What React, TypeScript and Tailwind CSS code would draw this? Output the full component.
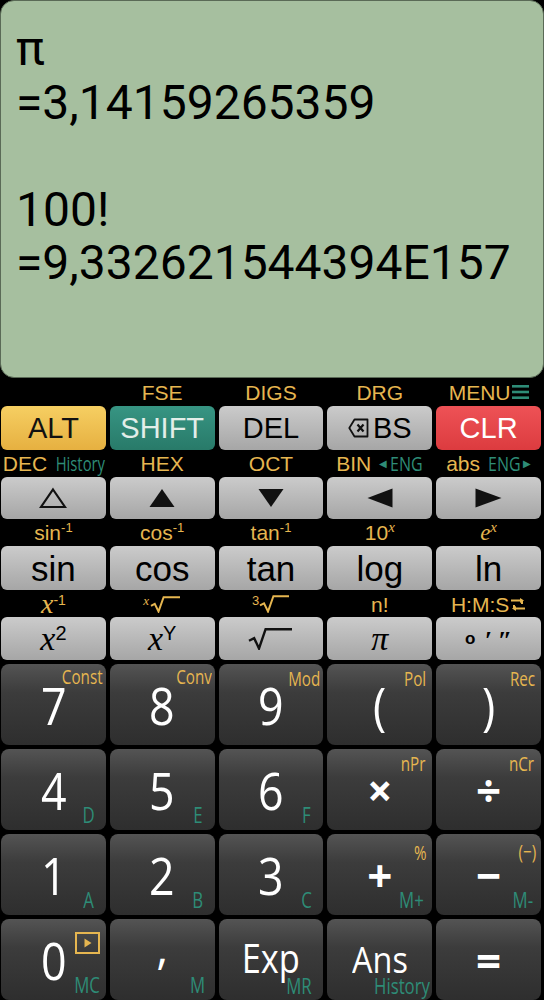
import React from "react";

const LS = "font-['Liberation_Sans',Arial,sans-serif]";
const SERIF = "font-['Liberation_Serif','Times_New_Roman',serif]";
const OS = "font-['Open_Sans',sans-serif]";
const RB = "font-['Roboto',sans-serif]";
const GOLD = "text-[#e6b650]";
const TEAL = "text-[#2e8c77]";

const ROW = "grid grid-cols-5 gap-x-[4px] pl-[1px] pr-[3px]";
const GRAY =
  "flex items-center justify-center rounded-[6px] bg-linear-to-b from-[#cbcbcb] to-[#a6a6a6] text-black";

function Cond({ w, s, children, cls = "" }: { w: string; s: string; children: React.ReactNode; cls?: string }) {
  return (
    <span className={`inline-flex justify-center whitespace-nowrap ${w} ${cls}`}>
      <span className={`inline-block whitespace-nowrap ${s}`}>{children}</span>
    </span>
  );
}

function Rad({ w, h, color, sw = 2.2 }: { w: number; h: number; color: string; sw?: number }) {
  const d = `M1 ${h * 0.58} L${h * 0.28} ${h * 0.46} L${h * 0.5} ${h - 1.5} L${h * 0.8} 1.2 H${w - 1}`;
  return (
    <svg width={w} height={h} viewBox={`0 0 ${w} ${h}`} className="inline-block">
      <path d={d} fill="none" stroke={color} strokeWidth={sw} strokeLinejoin="miter" />
    </svg>
  );
}

function Sup({ children, cls = "" }: { children: React.ReactNode; cls?: string }) {
  return <span className={`relative -top-[8px] text-[13px] ${cls}`}>{children}</span>;
}

function LabelRow({ h, items }: { h: string; items: React.ReactNode[] }) {
  return (
    <div className={`${ROW} ${h}`}>
      {items.map((it, i) => (
        <div key={i} className={`flex items-center justify-center whitespace-nowrap ${LS} ${GOLD} text-[21px] leading-none`}>
          {it}
        </div>
      ))}
    </div>
  );
}

type BK = {
  main: React.ReactNode;
  gold?: React.ReactNode;
  goldCls?: string;
  teal?: React.ReactNode;
  tealCls?: string;
  extra?: React.ReactNode;
};

function BigKey({ k }: { k: BK }) {
  return (
    <div className="relative flex items-center justify-center rounded-[8px] bg-linear-to-b from-[#545454] via-[#3c3c3c] via-35% to-[#2e2e2e] text-white">
      {k.main}
      {k.gold && (
        <span className={`absolute ${OS} ${GOLD} text-[20px] leading-none whitespace-nowrap ${k.goldCls ?? "top-[4px] right-[4px]"}`}>
          <span className="inline-block origin-right scale-x-[0.76]">{k.gold}</span>
        </span>
      )}
      {k.teal && (
        <span className={`absolute ${OS} ${TEAL} text-[21px] leading-none whitespace-nowrap flex justify-center ${k.tealCls ?? "bottom-[4px] right-0 w-[34px]"}`}>
          <span className="inline-block scale-x-[0.8]">{k.teal}</span>
        </span>
      )}
      {k.extra}
    </div>
  );
}

const Dg = ({ c }: { c: string }) => (
  <span className={`${OS} text-[52px] leading-none inline-block scale-x-[0.86]`}>{c}</span>
);
const Op = ({ c }: { c: string }) => (
  <span className={`${OS} text-[44px] font-bold leading-none inline-block`}>{c}</span>
);

export default function App() {
  const bigRows: BK[][] = [
    [
      { main: <Dg c="7" />, gold: "Const", goldCls: "top-[3px] right-[3px]" },
      { main: <Dg c="8" />, gold: "Conv", goldCls: "top-[3px] right-[3px]" },
      { main: <Dg c="9" />, gold: "Mod", goldCls: "top-[5px] right-[3px]" },
      { main: <Dg c="(" />, gold: "Pol", goldCls: "top-[5px] right-[6px]" },
      { main: <Dg c=")" />, gold: "Rec", goldCls: "top-[5px] right-[6px]" },
    ],
    [
      { main: <Dg c="4" />, teal: "D" },
      { main: <Dg c="5" />, teal: "E" },
      { main: <Dg c="6" />, teal: "F" },
      { main: <Op c="×" />, gold: "nPr", goldCls: "top-[5px] right-[7px]" },
      { main: <Op c="÷" />, gold: "nCr", goldCls: "top-[5px] right-[7px]" },
    ],
    [
      { main: <Dg c="1" />, teal: "A" },
      { main: <Dg c="2" />, teal: "B" },
      { main: <Dg c="3" />, teal: "C" },
      { main: <Op c="+" />, gold: "%", goldCls: "top-[9px] right-[6px]", teal: "M+", tealCls: "bottom-[4px] right-[4px] w-[34px]" },
      { main: <Op c="−" />, gold: "(−)", goldCls: "top-[8px] right-[5px]", teal: "M-", tealCls: "bottom-[4px] right-[1px] w-[34px]" },
    ],
    [
      {
        main: <Dg c="0" />,
        teal: "MC",
        tealCls: "bottom-[4px] right-[2px] w-[34px]",
        extra: (
          <svg width="25" height="22" viewBox="0 0 25 22" className="absolute top-[13px] right-[6px]">
            <rect x="1" y="1" width="23" height="20" fill="none" stroke="#e6b650" strokeWidth="2" />
            <path d="M9.5 6.5 L16.5 11 L9.5 15.5 Z" fill="#e6b650" />
          </svg>
        ),
      },
      {
        main: <span className={`${OS} text-[46px] leading-none inline-block -translate-y-[14px]`}>,</span>,
        teal: "M",
      },
      {
        main: <span className={`${OS} text-[40px] leading-none inline-block scale-x-[0.86] -translate-y-[2px]`}>Exp</span>,
        teal: "MR",
        tealCls: "bottom-[3px] right-[7px] w-[34px]",
      },
      {
        main: <span className={`${OS} text-[36px] leading-none inline-block scale-x-[0.9]`}>Ans</span>,
        teal: "History",
        tealCls: "bottom-[3px] right-[-5px] w-[70px]",
      },
      { main: <Op c="=" /> },
    ],
  ];

  return (
    <div className="w-[544px] h-[1000px] bg-black overflow-hidden flex flex-col">
      {/* Display */}
      <div
        className={`h-[378px] shrink-0 rounded-[14px] border border-[#5a6a56] bg-[#a6bf9f] px-[15px] pt-[21px] text-black ${RB} text-[48px] leading-[53.5px]`}
      >
        <div>π</div>
        <div>=3,14159265359</div>
        <div>&nbsp;</div>
        <div>100!</div>
        <div>=9,332621544394E157</div>
      </div>

      {/* Label row A */}
      <LabelRow
        h="h-[28px]"
        items={[
          "",
          "FSE",
          "DIGS",
          "DRG",
          <span key="m" className="flex items-center">
            MENU
            <svg width="17" height="14" viewBox="0 0 17 14" className="ml-[1px]">
              <rect x="0" y="0" width="17" height="2.6" fill="#2e8c77" />
              <rect x="0" y="5.7" width="17" height="2.6" fill="#2e8c77" />
              <rect x="0" y="11.4" width="17" height="2.6" fill="#2e8c77" />
            </svg>
          </span>,
        ]}
      />

      {/* Row 1 */}
      <div className={`${ROW} h-[44px] ${LS} text-[29px] leading-none`}>
        <div className="flex items-center justify-center rounded-[6px] bg-linear-to-b from-[#f6cf62] to-[#e6b040] text-[#111]">ALT</div>
        <div className="flex items-center justify-center rounded-[6px] bg-linear-to-b from-[#379583] to-[#287a69] text-[#e2eee9]">SHIFT</div>
        <div className={GRAY}>DEL</div>
        <div className={GRAY}>
          <svg width="21" height="20" viewBox="0 0 21 20" className="mr-[4px]">
            <path d="M6.5 1.5 H19.5 V18.5 H6.5 L1.3 10 Z" fill="none" stroke="#111" strokeWidth="1.8" strokeLinejoin="round" />
            <path d="M9.5 6.5 L15.5 13.5 M15.5 6.5 L9.5 13.5" stroke="#111" strokeWidth="2.2" />
          </svg>
          BS
        </div>
        <div className="flex items-center justify-center rounded-[6px] bg-linear-to-b from-[#ee5256] to-[#dc3b3f] text-white">CLR</div>
      </div>

      {/* Label row B */}
      <LabelRow
        h="h-[27px]"
        items={[
          <span key="a" className="flex items-center">
            DEC
            <Cond w="w-[48px]" s="scale-x-[0.74]" cls={`${OS} ${TEAL} text-[20px] ml-[9px]`}>History</Cond>
          </span>,
          "HEX",
          "OCT",
          <span key="b" className="flex items-center">
            BIN
            <span className={`${TEAL} text-[10px] ml-[8px] mr-[3px]`}>◀</span>
            <Cond w="w-[33px]" s="scale-x-[0.8]" cls={`${OS} ${TEAL} text-[20px]`}>ENG</Cond>
          </span>,
          <span key="c" className="flex items-center">
            abs
            <Cond w="w-[34px]" s="scale-x-[0.8]" cls={`${OS} ${TEAL} text-[20px] ml-[7px]`}>ENG</Cond>
            <span className={`${TEAL} text-[10px] ml-[2px]`}>▶</span>
          </span>,
        ]}
      />

      {/* Row 2 arrows */}
      <div className={`${ROW} h-[42px]`}>
        <div className={GRAY}>
          <svg width="28" height="22" viewBox="0 0 28 22">
            <path d="M14 2.5 L26 20 H2 Z" fill="none" stroke="#111" strokeWidth="2.2" />
          </svg>
        </div>
        <div className={GRAY}>
          <svg width="26" height="20" viewBox="0 0 26 20">
            <path d="M13 1 L25.5 19 H0.5 Z" fill="#111" />
          </svg>
        </div>
        <div className={GRAY}>
          <svg width="26" height="20" viewBox="0 0 26 20">
            <path d="M0.5 1 H25.5 L13 19 Z" fill="#111" />
          </svg>
        </div>
        <div className={GRAY}>
          <svg width="26" height="20" viewBox="0 0 26 20">
            <path d="M0.5 10 L25.5 0.5 V19.5 Z" fill="#111" />
          </svg>
        </div>
        <div className={GRAY}>
          <svg width="27" height="20" viewBox="0 0 27 20">
            <path d="M0.5 0.5 L26.5 10 L0.5 19.5 Z" fill="#111" />
          </svg>
        </div>
      </div>

      {/* Label row C */}
      <LabelRow
        h="h-[27px]"
        items={[
          <span key="1">sin<Sup>-1</Sup></span>,
          <span key="2">cos<Sup>-1</Sup></span>,
          <span key="3">tan<Sup>-1</Sup></span>,
          <span key="4">10<Sup cls={`${SERIF} italic text-[15px]`}>x</Sup></span>,
          <span key="5" className={`${SERIF} italic text-[23px]`}>e<Sup cls="text-[15px]">x</Sup></span>,
        ]}
      />

      {/* Row 3 */}
      <div className={`${ROW} h-[44px] ${LS} text-[35px] leading-none`}>
        <div className={GRAY}>sin</div>
        <div className={GRAY}>cos</div>
        <div className={GRAY}>tan</div>
        <div className={GRAY}>log</div>
        <div className={GRAY}>ln</div>
      </div>

      {/* Label row D */}
      <LabelRow
        h="h-[27px]"
        items={[
          <span key="1">
            <span className={`${SERIF} italic text-[28px]`}>x</span>
            <Sup cls="-top-[7px] text-[14px]">-1</Sup>
          </span>,
          <span key="2" className="flex items-start">
            <span className={`${SERIF} italic text-[13px] leading-none mr-[1px] -mt-[2px]`}>x</span>
            <Rad w={31} h={17} color="#e6b650" sw={2} />
          </span>,
          <span key="3" className="flex items-start">
            <span className="text-[13px] leading-none mr-[0px] -mt-[1px]">3</span>
            <Rad w={31} h={18} color="#e6b650" sw={2} />
          </span>,
          "n!",
          <span key="5" className="flex items-center">
            H:M:S
            <svg width="16" height="15" viewBox="0 0 16 15" className="ml-[1px]">
              <path d="M1 3.5 H12 M12 3.5 V7 M15 11.5 H4 M4 11.5 V8" stroke="#e6b650" strokeWidth="2" fill="none" />
              <path d="M10 1 L14 3.5 L10 6 Z" fill="#e6b650" />
              <path d="M6 9 L2 11.5 L6 14 Z" fill="#e6b650" />
            </svg>
          </span>,
        ]}
      />

      {/* Row 4 */}
      <div className={`${ROW} h-[43px] leading-none`}>
        <div className={GRAY}>
          <span className={`${SERIF} italic text-[34px]`}>x</span>
          <span className={`${LS} text-[20px] relative -top-[6px]`}>2</span>
        </div>
        <div className={GRAY}>
          <span className={`${SERIF} italic text-[34px]`}>x</span>
          <span className={`${LS} text-[20px] relative -top-[6px]`}>Y</span>
        </div>
        <div className={GRAY}>
          <Rad w={45} h={22} color="#111" sw={2.4} />
        </div>
        <div className={GRAY}>
          <span className={`${SERIF} italic text-[34px]`}>π</span>
        </div>
        <div className={GRAY}>
          <span className={`${LS} font-bold text-[17px]`}>o</span>
          <span className={`${SERIF} italic font-bold text-[26px] ml-[9px] relative top-[2px]`}>′</span>
          <span className={`${SERIF} italic font-bold text-[26px] ml-[6px] relative top-[2px]`}>″</span>
        </div>
      </div>

      {/* Big keys */}
      <div className="flex flex-col gap-y-[4px] pt-[4px]">
        {bigRows.map((row, ri) => (
          <div key={ri} className={`${ROW} h-[81px]`}>
            {row.map((k, ki) => (
              <BigKey key={ki} k={k} />
            ))}
          </div>
        ))}
      </div>
    </div>
  );
}
